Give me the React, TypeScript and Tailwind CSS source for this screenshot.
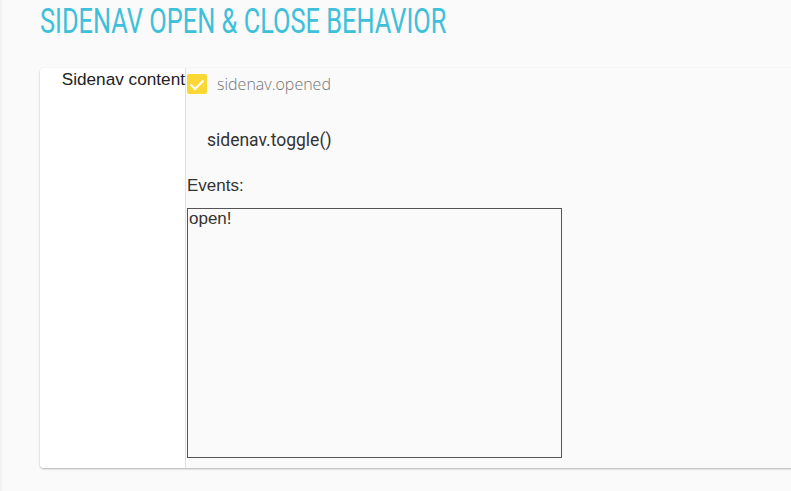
export default function App() {
  return (
    <div className="w-[791px] h-[491px] overflow-hidden bg-[#fafafa] flex">
      <div className="w-[2px] h-full bg-[#f3f3f3] shrink-0" />
      <div className="flex-1 flex flex-col pl-[38px]">
        <div className="h-[68px] pt-[2px]">
          <h1
            className="inline-block origin-left scale-x-[0.725] text-[35px] leading-[40px] text-[#3ec0da] whitespace-nowrap"
            style={{ fontFamily: 'Roboto, sans-serif' }}
          >
            SIDENAV OPEN &amp; CLOSE BEHAVIOR
          </h1>
        </div>
        <div className="flex w-[800px] h-[400px] rounded-l-[4px] shadow-[0_1px_2px_rgba(0,0,0,0.3)] bg-[#fafafa] overflow-hidden">
          <div
            className="w-[146px] shrink-0 bg-white border-r border-[#e0e0e0] text-right pt-[1px] text-[17.2px] leading-[20px] text-[#222] whitespace-nowrap"
            style={{ fontFamily: '"Liberation Sans", Arial, sans-serif' }}
          >
            Sidenav content
          </div>
          <div className="flex-1 flex flex-col pl-[1px]" style={{ fontFamily: '"Liberation Sans", Arial, sans-serif' }}>
            <div className="flex items-center h-[30px] pt-[2px]">
              <div className="w-[20px] h-[20px] rounded-[2px] bg-[#fdd835] flex items-center justify-center">
                <svg width="20" height="20" viewBox="0 0 20 20" fill="none" stroke="white" strokeWidth="2">
                  <path d="M3.5 10.5l4.5 4.5L16.5 6.5" />
                </svg>
              </div>
              <span
                className="ml-[10px] text-[16px] text-[#757575] font-light"
                style={{ fontFamily: '"Open Sans", sans-serif' }}
              >
                sidenav.opened
              </span>
            </div>
            <div
              className="h-[48px] mt-[18px] flex items-center pl-[20px] text-[17.5px] text-[#333]"
              style={{ fontFamily: 'Roboto, sans-serif' }}
            >
              sidenav.toggle()
            </div>
            <div className="mt-[12px] text-[17px] leading-[20px] text-[#333]">Events:</div>
            <div className="mt-[12px] w-[375px] h-[250px] border border-[#555] px-[1px] text-[17px] leading-[20px] text-[#333]">
              open!
            </div>
          </div>
        </div>
      </div>
    </div>
  );
}
